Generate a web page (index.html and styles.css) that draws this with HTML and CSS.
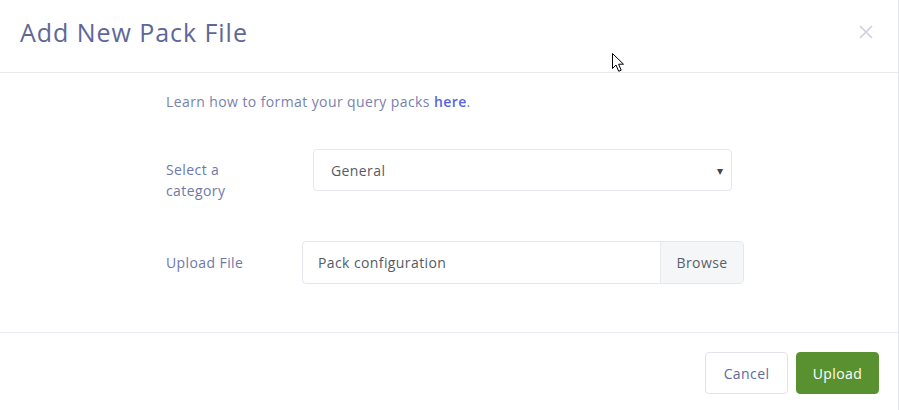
FILE: index.html
```html
<!DOCTYPE html>
<html>
<head>
<meta charset="utf-8">
<link rel="stylesheet" href="styles.css">
</head>
<body>
<div class="modal">
  <div class="modal-header">
    <h2 class="modal-title">Add New Pack File</h2>
    <svg class="close" width="14" height="14" viewBox="0 0 14 14"><path d="M1 1 L13 13 M13 1 L1 13" stroke="#cdcee0" stroke-width="1.6" fill="none"/></svg>
  </div>
  <div class="modal-body">
    <div class="content">
      <p class="hint">Learn how to format your query packs <a href="#">here</a>.</p>
      <div class="row row-select">
        <label class="label">Select a<br>category</label>
        <div class="select">
          <span>General</span>
          <span class="caret">&#9662;</span>
        </div>
      </div>
      <div class="row row-upload">
        <label class="label">Upload File</label>
        <div class="file">
          <span class="file-name">Pack configuration</span>
          <span class="browse">Browse</span>
        </div>
      </div>
    </div>
  </div>
  <div class="modal-footer">
    <button class="btn btn-cancel">Cancel</button>
    <button class="btn btn-upload">Upload</button>
  </div>
  <svg class="cursor" width="14" height="20" viewBox="0 0 14 20"><path d="M0.5 0.5 L0.5 15.5 L4 12 L6.7 18.3 L9.2 17.2 L6.6 11.2 L11.5 11.2 Z" fill="#fff" stroke="#000" stroke-width="1"/></svg>
</div>
</body>
</html>
```

FILE: styles.css
```css
html, body {
  margin: 0;
  padding: 0;
  background: #fff;
}
body {
  font-family: "Open Sans", "Noto Sans", sans-serif;
  letter-spacing: 0.4px;
}
.modal {
  position: relative;
  width: 898px;
  height: 410px;
  border-right: 1px solid #e4e4ee;
  display: flex;
  flex-direction: column;
}
.modal-header {
  height: 72px;
  box-sizing: content-box;
  border-bottom: 1px solid #e9e9f0;
  display: flex;
  align-items: flex-start;
  justify-content: space-between;
  padding: 0 25px 0 20px;
}
.modal-title {
  margin: 14px 0 0;
  font-size: 25px;
  line-height: 36px;
  font-weight: 500;
  color: #5e6798;
  letter-spacing: 0.95px;
}
.close {
  margin-top: 25px;
}
.modal-body {
  height: 259px;
  border-bottom: 1px solid #e9e9f0;
}
.content {
  margin-left: 166px;
  width: 578px;
  padding-top: 18px;
}
.hint {
  margin: 0;
  font-size: 14px;
  line-height: 22px;
  color: #7a81ad;
}
.hint a {
  color: #5565e2;
  font-weight: 600;
  text-decoration: none;
}
.row {
  display: flex;
  align-items: flex-start;
}
.label {
  font-size: 14px;
  line-height: 21px;
  color: #6f78a8;
}
.row-select {
  margin-top: 36px;
}
.row-select .label {
  width: 147px;
  margin-top: 10px;
}
.select {
  width: 419px;
  height: 42px;
  box-sizing: border-box;
  border: 1px solid #e6e7ee;
  border-radius: 4px;
  display: flex;
  align-items: center;
  justify-content: space-between;
  padding: 0 8px 0 17px;
  font-size: 14px;
  color: #555a66;
}
.caret {
  font-size: 12px;
  color: #444;
}
.row-upload {
  margin-top: 40px;
}
.row-upload .label {
  width: 136px;
  margin-top: 11px;
}
.file {
  width: 442px;
  height: 43px;
  box-sizing: border-box;
  border: 1px solid #e6e7ee;
  border-radius: 4px;
  display: flex;
  align-items: stretch;
  font-size: 14px;
  color: #555a66;
  overflow: hidden;
}
.file-name {
  flex: 1;
  display: flex;
  align-items: center;
  padding-left: 15px;
}
.browse {
  width: 82px;
  display: flex;
  align-items: center;
  justify-content: center;
  background: #f5f6f8;
  border-left: 1px solid #e9eaf0;
  color: #5b5f6a;
}
.modal-footer {
  flex: 1;
  display: flex;
  justify-content: flex-end;
  align-items: flex-start;
  gap: 8px;
  padding: 19px 19px 0 0;
}
.btn {
  height: 42px;
  width: 83px;
  border-radius: 4px;
  font-family: inherit;
  letter-spacing: 0.4px;
  font-size: 14px;
  cursor: pointer;
}
.btn-cancel {
  background: #fff;
  border: 1px solid #e2e2ee;
  color: #6068a0;
}
.btn-upload {
  background: #5a9130;
  border: 1px solid #5a9130;
  color: #fff;
  font-weight: 500;
}
.cursor {
  position: absolute;
  left: 612px;
  top: 53px;
}
```
